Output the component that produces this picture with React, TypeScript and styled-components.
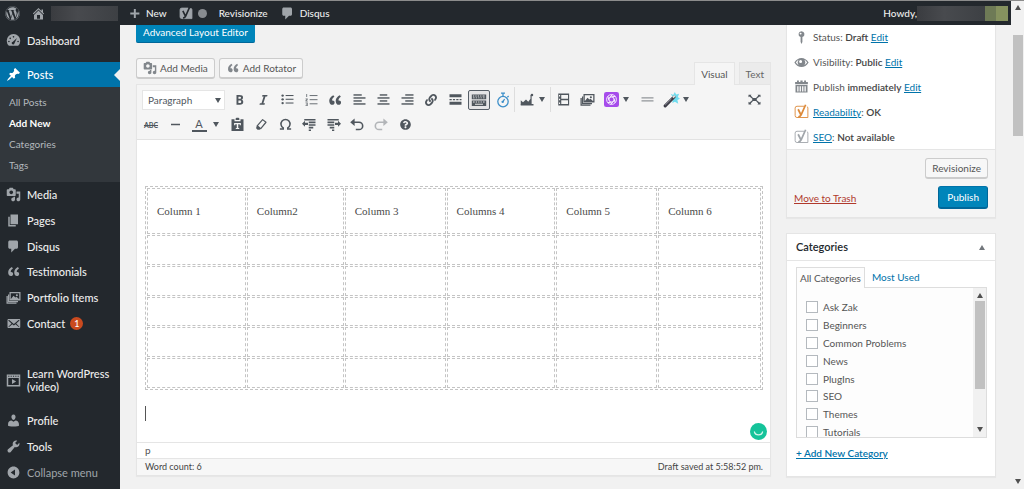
import React from "react";
import styled, { createGlobalStyle, css } from "styled-components";
import { FaWordpress, FaQuestionCircle, FaLink } from "react-icons/fa";

const sans = `Lato, "Open Sans", sans-serif`;
const blue = "#0085ba";
const line = "#e5e5e5";

const GlobalStyle = createGlobalStyle`
  * { box-sizing: border-box; }
  html { overflow: hidden; }
  body { margin: 0; background: #f1f1f1; color: #555; font: 10px/16px ${sans}; }
  button, input, select { font: inherit; color: inherit; margin: 0; }
  ul { list-style: none; margin: 0; padding: 0; }
  a { color: #0073aa; }
  svg { display: block; flex: none; }
`;

/* ---------- icons ---------- */

type GlyphProps = { size?: number; children: React.ReactNode };
const Glyph = ({ size = 15, children }: GlyphProps) => (
  <svg width={size} height={size} viewBox="0 0 20 20" fill="currentColor" aria-hidden="true">
    {children}
  </svg>
);

const paths = {
  home: "M16 8.5l1.53 1.53-1.06 1.06L10 4.6l-6.47 6.49-1.06-1.06L10 2.5l4 4v-2h2v4zm-6-2.46l6 5.99V18H4v-5.97zM12 17v-5H8v5h4z",
  pin: "M10.44 3.02l1.82-1.82 6.36 6.35-1.83 1.82c-1.05-.68-2.48-.57-3.41.36l-.75.75c-.92.93-1.04 2.35-.35 3.41l-1.83 1.82-2.41-2.41-2.8 2.79c-.42.42-3.38 2.71-3.8 2.29s1.86-3.39 2.28-3.81l2.79-2.79L4.1 9.36l1.83-1.82c1.05.69 2.48.57 3.4-.36l.75-.75c.93-.92 1.05-2.35.36-3.41z",
  media: "M13 11V4c0-.55-.45-1-1-1h-1.67L9 1H5L3.67 3H2c-.55 0-1 .45-1 1v7c0 .55.45 1 1 1h10c.55 0 1-.45 1-1zM7 4.5c1.38 0 2.5 1.12 2.5 2.5S8.38 9.5 7 9.5 4.5 8.38 4.5 7 5.62 4.5 7 4.5zM14 6h5v10.5c0 1.38-1.12 2.5-2.5 2.5S14 17.88 14 16.5s1.12-2.5 2.5-2.5c.17 0 .34.02.5.05V9h-3V6zm-4 8.05V13h2v3.5c0 1.38-1.12 2.5-2.5 2.5S7 17.88 7 16.5 8.12 14 9.5 14c.17 0 .34.02.5.05z",
  page: "M6 15V2h10v13H6zm-1 1h8v2H3V5h2v11z",
  comment: "M5 2h9c1.1 0 2 .9 2 2v7c0 1.1-.9 2-2 2h-2l-5 5v-5H5c-1.1 0-2-.9-2-2V4c0-1.1.9-2 2-2z",
  quote: "M9.49 13.22c0-.74-.2-1.38-.61-1.9-.62-.78-1.83-.88-2.53-.72-.29-1.65 1.11-3.75 2.92-4.65L7.88 4c-2.73 1.3-5.42 4.28-4.96 8.05C3.21 14.43 4.59 16 6.54 16c.85 0 1.56-.25 2.12-.75s.83-1.18.83-2.03zm8.05 0c0-.74-.2-1.38-.61-1.9-.63-.78-1.83-.88-2.53-.72-.29-1.65 1.11-3.75 2.92-4.65L15.93 4c-2.73 1.3-5.41 4.28-4.95 8.05.29 2.38 1.66 3.95 3.61 3.95.85 0 1.56-.25 2.12-.75s.83-1.18.83-2.03z",
  email: "M19 14.5v-9c0-.83-.67-1.5-1.5-1.5H3.49c-.83 0-1.5.67-1.5 1.5v9c0 .83.67 1.5 1.5 1.5H17.5c.83 0 1.5-.67 1.5-1.5zm-1.31-9.11c.33.33.15.67-.03.84L13.6 9.95l3.9 4.06c.12.14.2.36.06.51-.13.16-.43.15-.56.05l-4.37-3.73-2.14 1.95-2.13-1.95-4.37 3.73c-.13.1-.43.11-.56-.05-.14-.15-.06-.37.06-.51l3.9-4.06-4.06-3.72c-.18-.17-.36-.51-.03-.84s.67-.17.95.07l6.24 5.04 6.25-5.04c.28-.24.62-.4.95-.07z",
  user: "M10 9.25c-2.27 0-2.73-3.44-2.73-3.44C7 4.02 7.82 2 9.97 2c2.16 0 2.98 2.02 2.71 3.81 0 0-.41 3.44-2.68 3.44zm0 2.57L12.72 10c2.39 0 4.52 2.33 4.52 4.53v2.49s-3.65 1.13-7.24 1.13c-3.65 0-7.24-1.13-7.24-1.13v-2.49c0-2.25 1.94-4.48 4.47-4.48z",
  tools: "M16.68 9.77c-1.34 1.34-3.3 1.67-4.95.99l-5.41 6.52c-.99.99-2.59.99-3.58 0s-.99-2.59 0-3.57l6.52-5.42c-.68-1.65-.35-3.61.99-4.95 1.28-1.28 3.12-1.62 4.72-1.06l-2.89 2.89 2.82 2.82 2.86-2.87c.53 1.58.18 3.39-1.08 4.65z",
  collapse: "M10 2.16c4.33 0 7.84 3.51 7.84 7.84s-3.51 7.84-7.84 7.84S2.16 14.33 2.16 10 5.71 2.16 10 2.16zm2 11.72V6.12L6.18 9.97z",
  bold: "M6 4v13h4.54c1.37 0 2.46-.33 3.26-1 .8-.66 1.2-1.58 1.2-2.77 0-.84-.17-1.51-.51-2.01s-.9-.85-1.67-1.03v-.09c.57-.1 1.02-.4 1.36-.9s.51-1.13.51-1.91c0-1.14-.39-1.98-1.17-2.5C12.75 4.26 11.5 4 9.78 4H6zm2.57 5.15V6.26h1.36c.73 0 1.27.11 1.61.32.34.22.51.58.51 1.07 0 .54-.16.92-.47 1.15s-.82.35-1.51.35h-1.5zm0 2.19h1.6c1.44 0 2.16.53 2.16 1.61 0 .6-.17 1.05-.51 1.34s-.86.43-1.57.43H8.57v-3.38z",
  italic: "M14.78 6h-2.13l-2.8 9h2.12l-.62 2H4.6l.62-2h2.14l2.8-9H8.03l.62-2h6.75z",
  plus: "M9 3h3v5.500h5.500v3H12V17H9v-5.500H3.500v-3H9z",
  gauge: "M3.800 17A9 9 0 1 1 16.200 17zM10 4a1.100 1.100 0 1 0 0 2.200A1.100 1.100 0 0 0 10 4zM5.600 6a1.100 1.100 0 1 0 0 2.200A1.100 1.100 0 0 0 5.600 6zM14.600 6.500L9.200 11.500a1.900 1.900 0 1 0 2.100 2zM3.900 10.200a1.100 1.100 0 1 0 0 2.200 1.100 1.100 0 0 0 0-2.200zM16.100 10.200a1.100 1.100 0 1 0 0 2.200 1.100 1.100 0 0 0 0-2.200z",
  video: "M1 2h18v16H1zM3 6.500v9.500h14V6.500zM3 3.500v1.400h1.500V3.500zM6.200 3.500v1.400h1.500V3.500zM9.300 3.500v1.400h1.500V3.500zM12.400 3.500v1.400h1.500V3.500zM15.500 3.500v1.400H17V3.500zM8 8l5.500 3.300L8 14.600z",
  post: "M10 1.500a4 4 0 0 1 1.200 7.800V16L10 18.500 8.800 16V9.300A4 4 0 0 1 10 1.500zM8.800 3.500a1.300 1.300 0 1 0 0 2.600 1.300 1.300 0 0 0 0-2.600z",
  eye: "M.5 10C3 6 6.300 4 10 4s7 2 9.500 6c-2.500 4-5.800 6-9.500 6S3 14 .5 10zM2.500 10c1 1.600 2.300 2.900 3.900 3.600a5 5 0 0 1 0-7.200C4.800 7.100 3.500 8.400 2.500 10zM13.600 6.400a5 5 0 0 1 0 7.200c1.600-.7 2.900-2 3.900-3.600-1-1.600-2.300-2.900-3.900-3.600zM8.800 6.600a2 2 0 1 0 0 4 2 2 0 0 0 0-4z",
  calendar: "M1.500 4H4V2h2.500v2h2V2h3v2h2V2H16v2h2.500v3h-17zM2 8h16v10H2zM4.300 9.500v7h1.700v-7zM7.500 9.500v7h1.700v-7zM10.800 9.500v7h1.700v-7zM14 9.500v7h1.700v-7z",
};
type IconName = keyof typeof paths;
const Icon = ({ name, size }: { name: IconName; size?: number }) => (
  <Glyph size={size}>
    <path fillRule="evenodd" d={paths[name]} />
  </Glyph>
);

const Gallery = ({ size }: { size?: number }) => (
  <Glyph size={size}>
    <g fill="none" stroke="currentColor" strokeWidth="1.700">
      <path d="M5.500 3.500h13v9.500h-13z" />
      <path d="M3.500 6v9.500H16" />
      <path d="M1.500 8v9.500H14" />
    </g>
    <path d="M6 12.500l4-5 2.500 2.500L14 9l4 3.500z" />
    <circle cx="14.500" cy="7" r="1.400" />
  </Glyph>
);

const YoastLogo = ({ size = 14, solid }: { size?: number; solid?: boolean }) => (
  <svg width={size} height={size} viewBox="0 0 20 20" fill="none" aria-hidden="true">
    <path
      d="M13.500 3H4a2.500 2.500 0 0 0-2.500 2.500v10A2.500 2.500 0 0 0 4 18h14.500V5.500a2.500 2.500 0 0 0-1.300-2.200"
      fill={solid ? "currentColor" : "none"}
      stroke="currentColor"
      strokeWidth="1.200"
    />
    <path d="M5.500 7l3.500 7M15.500 1L9.500 14.500c-.8 1.900-1.600 2.600-3.800 2.700" stroke={solid ? "#23282d" : "currentColor"} strokeWidth="2.300" />
  </svg>
);

const Bars = ({ rows }: { rows: [number, number, number][] }) => (
  <Glyph>
    {rows.map(([x, y, w]) => (
      <rect key={y} x={x} y={y} width={w} height="1.900" />
    ))}
  </Glyph>
);

const BulletList = () => (
  <Glyph>
    {[4, 9, 14].map((y) => (
      <g key={y}>
        <circle cx="3.500" cy={y + 0.8} r="1.600" />
        <rect x="7.500" y={y} width="10.500" height="1.400" />
      </g>
    ))}
  </Glyph>
);
const NumberList = () => (
  <Glyph>
    <path d="M3 2.500h1.200v4H3zM2 8.500h3v1.500L3.500 11.500H5v1H2V11l1.500-1.500H2zM2 14h3v4.500H2v-1h1.800v-.8H2.500v-.9h1.300V15H2z" opacity=".8" />
    {[4, 9.500, 15].map((y) => (
      <rect key={y} x="7.500" y={y} width="10.500" height="1.400" opacity=".8" />
    ))}
  </Glyph>
);
const ReadMore = () => (
  <Glyph>
    <path d="M2 3h16v4H2zM2 13h16v4H2zM2 9.200h3v1.700H2zM6.500 9.200h3v1.700h-3zM11 9.200h3v1.700h-3zM15.500 9.200H18v1.700h-2.500z" />
  </Glyph>
);
const Keyboard = () => (
  <Glyph size={16}>
    <path fillRule="evenodd" d="M1 3h18v6H1zM2.500 4.500v1h1.500v-1zM5.500 4.500v1H7v-1zM8.500 4.500v1H10v-1zM11.500 4.500v1H13v-1zM14.500 4.500v1H17v-1zM2.500 6.800v1h2v-1zM6 6.800v1h1.500v-1zM9 6.800v1h1.500v-1zM12 6.800v1h1.500v-1zM15 6.800v1h2v-1zM1 10.500h18v7H1zM2.500 12v1.200h2V12zM6 12v1.200h1.500V12zM9 12v1.200h1.500V12zM12 12v1.200h1.500V12zM15 12v1.200h2V12zM5 14.800V16h10v-1.200z" />
  </Glyph>
);
const Stopwatch = () => (
  <Glyph size={16}>
    <g fill="none" stroke="#3d8fc9" strokeWidth="1.600">
      <circle cx="10" cy="12" r="6.500" />
      <path d="M10 5V2M7.500 1.500h5M15.500 6.500l1.500-1.500M9.500 12.500L12 9" />
    </g>
    <circle cx="9.600" cy="12.300" r="1.500" fill="#3d8fc9" />
  </Glyph>
);
const Chart = () => (
  <Glyph>
    <path d="M1 17v-6l3 2.500 4-3.500 3 3 3-4V4h1.500v13z" />
    <circle cx="16" cy="4" r="1.700" />
    <path d="M1 16h17v2H1z" />
  </Glyph>
);
const TableIcon = () => (
  <Glyph>
    <path fillRule="evenodd" d="M3 2h14.500v16H3zM4 4v2h1.500V4zM4 9v2h1.500V9zM4 14v2h1.500v-2zM7 4v5h9V4zM7 11v5h9v-5z" />
  </Glyph>
);
const Shutter = () => (
  <svg width="15" height="15" viewBox="0 0 20 20" aria-hidden="true">
    <rect width="20" height="20" rx="3" fill="#a64ceb" />
    <g fill="none" stroke="#fff" strokeWidth="1.200">
      <circle cx="10" cy="10" r="6.500" />
      <circle cx="10" cy="10" r="3.500" />
      <path d="M10 6.500l5-.8M13.300 9l1.500 5M12.500 12.500l-3.500 4M10 13.500l-5 .8M6.700 11L5.200 6M7.500 7.500l3.500-4" />
    </g>
  </svg>
);
const Wand = () => (
  <svg width="17" height="16" viewBox="0 0 20 19" aria-hidden="true">
    <path d="M9 2l3 1.500L14 0l1.500 3L19 2l-1.500 4L20 8l-3 1.500L18 14l-4-2.500L11 13l.5-4L9 7l2.500-1z" fill="#4fd6ec" opacity=".8" />
    <path d="M2.500 16.500L13 6" stroke="#3c3c46" strokeWidth="3.600" strokeLinecap="round" />
    <path d="M11.500 6.500L14 4.500" stroke="#ddd" strokeWidth="2.500" />
    <path d="M2.500 15.500L10 8" stroke="#a9a9b4" strokeWidth=".9" />
  </svg>
);
const Expand = () => (
  <Glyph>
    <path d="M2 3.500h4L5 4.700 8 8h4l3-3.300-1-1.200h4V7l-1.300-.9L13 9v2l3.700 2.900L18 13v3.500h-4l1-1.200L12 12H8l-3 3.300 1 1.200H2V13l1.300.9L7 11V9L3.300 6.100 2 7z" />
  </Glyph>
);
const Paste = () => (
  <Glyph>
    <path fillRule="evenodd" d="M7.500 4V2.500A1.500 1.500 0 0 1 9 1h2a1.500 1.500 0 0 1 1.500 1.500V4zM2 3h4v2.500h8V3h4v15.500H2zM5.500 8v3h1.500V9.800h2v5H7.700V16h4.600v-1.200H11v-5h2V11h1.500V8z" />
  </Glyph>
);
const Eraser = () => (
  <Glyph>
    <path d="M11.500 3.500l4.500 3.500-7 8.500-4.800-3.700z" fill="none" stroke="currentColor" strokeWidth="1.600" strokeLinejoin="round" />
    <path d="M4.200 11.800L9 15.500 7.500 17H4.800L3 15.300v-2z" />
  </Glyph>
);
const Omega = () => (
  <Glyph>
    <path d="M2.500 16h4.500v-1.500A6 6 0 1 1 13 14.500V16h4.500" fill="none" stroke="currentColor" strokeWidth="2" />
  </Glyph>
);
const Shift = ({ inward }: { inward?: boolean }) => (
  <Glyph>
    <g transform={inward ? "matrix(-1 0 0 1 20 0)" : undefined}>
      <path d="M3 2.500h15v2.200H3zM9 6h9v2.200H9zM9 9.500h9v2.200H9zM9 13h6v2.200H9zM9 16.500h3v2H9zM0 9l4-4v2.500h4v3H4V13z" />
    </g>
  </Glyph>
);
const Turn = ({ redo }: { redo?: boolean }) => (
  <Glyph size={16}>
    <g transform={redo ? "matrix(-1 0 0 1 20 0)" : undefined} opacity={redo ? 0.4 : 1}>
      <path d="M5 6.500h7.500a4.600 4.600 0 0 1 0 9.200H8.500" fill="none" stroke="currentColor" strokeWidth="2" />
      <path d="M7 1.800v9.400L1.500 6.500z" />
    </g>
  </Glyph>
);
const Caret = ({ up }: { up?: boolean }) => (
  <svg width="6" height="5" viewBox="0 0 6 5" fill="currentColor" aria-hidden="true">
    <path d={up ? "M0 5h6L3 0z" : "M0 0h6L3 5z"} />
  </svg>
);

/* ---------- page frame ---------- */

const Page = styled.div`
  display: grid;
  grid-template-columns: minmax(0, 1fr) 13px;
  min-height: 100vh;
  border-top: 1px solid #8c8c8c;
`;
const Admin = styled.div`
  display: grid;
  grid-template-columns: 120px minmax(0, 1fr);
  grid-template-rows: 24px minmax(0, 1fr);
`;
const AdminBar = styled.header`
  grid-column: 1 / -1;
  display: flex;
  align-items: center;
  padding: 0 3px 0 5px;
  background: #23282d;
  color: #eee;
`;
const BarLink = styled.a<{ $gap?: number }>`
  display: flex;
  align-items: center;
  gap: 5px;
  margin-right: ${(p) => p.$gap ?? 12}px;
  color: #eee;
  text-decoration: none;
  font-weight: 500;
  svg { color: #a0a5aa; }
`;
const Redacted = styled.span<{ $width: number }>`
  width: ${(p) => p.$width}px;
  height: 15px;
  background: linear-gradient(90deg, #3a3c40, #484a4e 40%, #3d4044);
`;
const Avatar = styled.span`
  width: 23px;
  height: 15px;
  background: linear-gradient(90deg, #6e7a56 50%, #86925f 50%);
`;
const StatusDot = styled.span`
  width: 9px;
  height: 9px;
  border-radius: 50%;
  background: #888c90;
`;
const Howdy = styled.div`
  display: flex;
  align-items: center;
  margin-left: auto;
  font-weight: 500;
`;

/* ---------- side menu ---------- */

const SideMenu = styled.nav`
  background: #23282d;
  padding-top: 3px;
  font-size: 11px;
`;
const MenuGroup = styled.ul<{ $height: number; $gap?: number; $rowGap?: number }>`
  display: grid;
  grid-auto-rows: 1fr;
  row-gap: ${(p) => p.$rowGap ?? 0}px;
  height: ${(p) => p.$height}px;
  margin-top: ${(p) => p.$gap ?? 0}px;
`;
const MenuLink = styled.a<{ $active?: boolean; $muted?: boolean }>`
  position: relative;
  display: flex;
  align-items: center;
  gap: 6px;
  height: 100%;
  padding-left: 6px;
  color: ${(p) => (p.$muted ? "#a0a5aa" : "#eee")};
  line-height: 13px;
  font-weight: ${(p) => (p.$muted ? 400 : 500)};
  text-decoration: none;
  svg { color: #a0a5aa; }
  ${(p) =>
    p.$active &&
    css`
      background: #0073aa;
      color: #fff;
      svg { color: #fff; }
      &::after {
        content: "";
        position: absolute;
        right: 0;
        top: 7px;
        border: 6px solid transparent;
        border-left: 0;
        border-right-color: #f1f1f1;
      }
    `}
`;
const SubMenu = styled.ul`
  padding: 5px 0 6px 9px;
  background: #32373c;
  font-size: 10px;
`;
const SubLink = styled.a<{ $current?: boolean }>`
  display: block;
  line-height: 21px;
  color: ${(p) => (p.$current ? "#fff" : "#b4b9be")};
  font-weight: ${(p) => (p.$current ? 700 : 400)};
  text-decoration: none;
`;
const CountBadge = styled.span`
  width: 13px;
  height: 13px;
  margin-left: -1px;
  border-radius: 50%;
  background: #ca4a1f;
  color: #fff;
  font-size: 9px;
  text-align: center;
`;

/* ---------- editor ---------- */

const Content = styled.div`
  display: grid;
  grid-template-columns: minmax(0, 1fr) 210px;
  gap: 15px;
  align-items: start;
  padding: 0 15px 0 16px;
`;
const EditorColumn = styled.main`
  display: flex;
  flex-direction: column;
  align-items: stretch;
`;
const LayoutButton = styled.button`
  align-self: flex-start;
  height: 18px;
  padding: 0 7px 2px;
  border: 0;
  border-bottom: 1px solid #006799;
  border-radius: 0 0 2px 2px;
  background: ${blue};
  color: #fff;
  line-height: 15px;
`;
const MediaRow = styled.div`
  display: flex;
  align-items: flex-start;
  gap: 4px;
  margin-top: 15px;
`;
const Button = styled.button`
  display: flex;
  align-items: center;
  gap: 3px;
  height: 21px;
  padding: 0 6px;
  border: 1px solid #ccc;
  border-bottom-width: 2px;
  border-radius: 3px;
  background: #f7f7f7;
  svg { color: #82878c; }
`;
const Tabs = styled.div`
  display: flex;
  gap: 4px;
  margin: 4px 0 0 auto;
`;
const Tab = styled.button<{ $current?: boolean }>`
  height: ${(p) => (p.$current ? 23 : 22)}px;
  margin-bottom: ${(p) => (p.$current ? -1 : 0)}px;
  padding: 0 6px;
  border: 1px solid ${line};
  border-bottom: 0;
  background: ${(p) => (p.$current ? "#f5f5f5" : "#ebebeb")};
  color: ${(p) => (p.$current ? "#555" : "#666")};
  z-index: 1;
`;
const Editor = styled.section`
  border: 1px solid ${line};
  box-shadow: 0 1px 1px rgba(0, 0, 0, 0.04);
  background: #fff;
`;
const Toolbar = styled.div`
  padding: 2px 4px 2px 2px;
  border-bottom: 1px solid #e2e2e2;
  background: #f5f5f5;
  color: #50575e;
`;
const ToolRow = styled.div`
  display: flex;
  align-items: center;
  height: 25px;
`;
const FormatSelect = styled.div`
  position: relative;
  flex: none;
  margin: 0 2px 0 3px;
  select {
    display: block;
    width: 83px;
    height: 20px;
    padding: 0 5px;
    border: 1px solid ${line};
    border-radius: 0;
    background: #fff;
    appearance: none;
  }
  svg {
    position: absolute;
    right: 4px;
    top: 8px;
    pointer-events: none;
  }
`;
const Tool = styled.button<{ $on?: boolean; $end?: boolean }>`
  display: grid;
  place-items: center;
  flex: none;
  width: ${(p) => (p.$on ? 22 : 24)}px;
  height: 20px;
  margin: 0 ${(p) => (p.$on ? 1 : 0)}px;
  ${(p) => p.$end && "margin-left: auto;"}
  padding: 0;
  border: ${(p) => (p.$on ? "1px solid #555d66" : "0")};
  border-radius: 2px;
  background: ${(p) => (p.$on ? "#e4e4e6" : "none")};
`;
const Drop = styled.button<{ $width?: number }>`
  display: flex;
  align-items: center;
  width: ${(p) => p.$width ?? 12}px;
  height: 20px;
  padding: 0 0 0 ${(p) => (p.$width ? 2 : 0)}px;
  border: 0;
  background: none;
`;
const ToolGroup = styled.div`
  display: flex;
  align-items: center;
  height: 25px;
  box-shadow: -1px 0 0 #ddd;
`;
const Strike = styled.span`
  font-size: 7px;
  line-height: 10px;
  font-weight: 700;
  text-decoration: line-through;
`;
const ColorLetter = styled.span`
  width: 15px;
  border-bottom: 2px solid currentColor;
  font-size: 11px;
  line-height: 12px;
`;
const Canvas = styled.div`
  position: relative;
  padding: 46px 7px 21px 8px;
`;
const DataTable = styled.table`
  width: 100%;
  height: 204px;
  table-layout: fixed;
  border: 1px dashed #c4c4c4;
  border-collapse: separate;
  border-spacing: 1px;
  color: #4a4a4a;
  font-family: "Liberation Serif", serif;
  font-size: 11px;
  th, td {
    padding: 0 9px;
    border: 1px dashed #c4c4c4;
    text-align: left;
    font-weight: 400;
  }
  thead tr { height: 46px; }
`;
const TextCaret = styled.div`
  width: 1px;
  height: 15px;
  margin-top: 16px;
  background: #555;
`;
const Checker = styled.div`
  position: absolute;
  right: 3px;
  bottom: 2px;
`;
const PathBar = styled.div`
  height: 16px;
  padding-left: 8px;
  border-top: 1px solid ${line};
  line-height: 15px;
`;
const StatusBar = styled.div`
  display: flex;
  justify-content: space-between;
  padding: 0 7px 0 8px;
  border-top: 1px solid ${line};
  background: #f7f7f7;
  color: #444;
  font-size: 9px;
`;

/* ---------- right column ---------- */

const Aside = styled.aside`
  display: flex;
  flex-direction: column;
  gap: 15px;
`;
const Box = styled.section`
  border: 1px solid ${line};
  box-shadow: 0 1px 1px rgba(0, 0, 0, 0.04);
  background: #fff;
`;
const PublishBox = styled(Box)`
  border-top: 0;
`;
const PublishRow = styled.p`
  display: flex;
  align-items: center;
  gap: 4px;
  margin: 0;
  padding-left: 7px;
  svg { color: #82878c; }
  b { font-weight: 600; color: #444; }
`;
const PublishRows = styled.div`
  display: grid;
  grid-auto-rows: 1fr;
  height: 125px;
  border-bottom: 1px solid ${line};
`;
const YoastMark = styled.span<{ $color: string }>`
  svg { color: ${(p) => p.$color}; }
`;
const PublishFooter = styled.div`
  display: flex;
  flex-direction: column;
  gap: 7px;
  padding: 8px 7px;
  background: #f5f5f5;
  button { margin-left: auto; }
`;
const FooterRow = styled.div`
  display: flex;
  align-items: center;
`;
const TrashLink = styled.a`
  color: #b0392c;
`;
const PlainButton = styled(Button)`
  padding: 0 6px;
`;
const PrimaryButton = styled(Button)`
  height: 23px;
  padding: 0 8px;
  border-color: #0073aa #006799 #006799;
  background: ${blue};
  color: #fff;
`;
const BoxHeader = styled.h2`
  display: flex;
  align-items: center;
  justify-content: space-between;
  height: 27px;
  margin: 0;
  padding: 0 10px 0 9px;
  border-bottom: 1px solid ${line};
  color: #23282d;
  font-size: 11px;
  font-weight: 600;
  svg { color: #72777c; }
`;
const BoxBody = styled.div`
  padding: 6px 8px 15px 9px;
`;
const CategoryTabs = styled.div`
  display: flex;
  a {
    padding: 2px 7px;
    text-decoration: none;
  }
`;
const CategoryTab = styled.button`
  height: 21px;
  margin-bottom: -1px;
  padding: 0 3px;
  border: 1px solid #ddd;
  border-bottom: 0;
  background: #fdfdfd;
  z-index: 1;
`;
const CategoryPanel = styled.div`
  display: flex;
  height: 151px;
  overflow: hidden;
  border: 1px solid #ddd;
  background: #fdfdfd;
`;
const CategoryList = styled.ul`
  display: grid;
  grid-auto-rows: 1fr;
  flex: 1;
  height: 143px;
  margin: 11px 0 0 9px;
`;
const CategoryLabel = styled.label`
  display: flex;
  align-items: center;
  gap: 5px;
  input {
    appearance: none;
    width: 12px;
    height: 12px;
    border: 1px solid #b4b9be;
    background: #fff;
  }
`;
const ScrollTrack = styled.div<{ $pad?: number }>`
  display: flex;
  flex-direction: column;
  align-items: center;
  width: 13px;
  padding: ${(p) => p.$pad ?? 5}px 0 5px;
  background: #f1f1f1;
  color: #505050;
`;
const ScrollThumb = styled.div<{ $length: number; $gap: number }>`
  width: 10px;
  height: ${(p) => p.$length}px;
  margin: ${(p) => p.$gap}px 0 auto;
  background: #c1c1c1;
`;
const AddCategory = styled.a`
  display: inline-block;
  margin-top: 7px;
  font-weight: 600;
`;

const mainItems: { label: string; icon: React.ReactNode; count?: number }[] = [
  { label: "Media", icon: <Icon name="media" /> },
  { label: "Pages", icon: <Icon name="page" /> },
  { label: "Disqus", icon: <Icon name="comment" /> },
  { label: "Testimonials", icon: <Icon name="quote" /> },
  { label: "Portfolio Items", icon: <Gallery /> },
  { label: "Contact", icon: <Icon name="email" />, count: 1 },
];
const subItems = ["All Posts", "Add New", "Categories", "Tags"];
const columns: [string, number][] = [
  ["Column 1", 100],
  ["Column2", 98],
  ["Column 3", 102],
  ["Columns 4", 110],
  ["Column 5", 102],
  ["Column 6", 104],
];
const categories = ["Ask Zak", "Beginners", "Common Problems", "News", "PlugIns", "SEO", "Themes", "Tutorials"];

const tool = (label: string, icon: React.ReactNode) => (
  <Tool key={label} aria-label={label}>
    {icon}
  </Tool>
);

export default function App() {
  return (
    <>
      <GlobalStyle />
      <Page>
        <Admin>
          <AdminBar>
            <BarLink href="#" $gap={11} aria-label="WordPress"><FaWordpress size={15} /></BarLink>
            <BarLink href="#" $gap={10} aria-label="Site">
              <Icon name="home" />
              <Redacted $width={67} />
            </BarLink>
            <BarLink href="#"><Icon name="plus" size={13} />New</BarLink>
            <BarLink href="#" aria-label="SEO">
              <YoastLogo solid />
              <StatusDot />
            </BarLink>
            <BarLink href="#">Revisionize</BarLink>
            <BarLink href="#"><Icon name="comment" />Disqus</BarLink>
            <Howdy>Howdy,<Redacted $width={68} /><Avatar /></Howdy>
          </AdminBar>

          <SideMenu aria-label="Main menu">
            <MenuGroup $height={59} $rowGap={8}>
              <li><MenuLink href="#"><Icon name="gauge" />Dashboard</MenuLink></li>
              <li><MenuLink href="#" $active><Icon name="pin" />Posts</MenuLink></li>
            </MenuGroup>
            <SubMenu>
              {subItems.map((s) => (
                <li key={s}><SubLink href="#" $current={s === "Add New"}>{s}</SubLink></li>
              ))}
            </SubMenu>
            <MenuGroup $height={154}>
              {mainItems.map((m) => (
                <li key={m.label}>
                  <MenuLink href="#">
                    {m.icon}
                    {m.label}
                    {m.count && <CountBadge>{m.count}</CountBadge>}
                  </MenuLink>
                </li>
              ))}
            </MenuGroup>
            <MenuGroup $height={38} $gap={25}>
              <li><MenuLink href="#"><Icon name="video" />Learn WordPress<br />(video)</MenuLink></li>
            </MenuGroup>
            <MenuGroup $height={77} $gap={9}>
              <li><MenuLink href="#"><Icon name="user" />Profile</MenuLink></li>
              <li><MenuLink href="#"><Icon name="tools" />Tools</MenuLink></li>
              <li><MenuLink href="#" $muted><Icon name="collapse" />Collapse menu</MenuLink></li>
            </MenuGroup>
          </SideMenu>

          <Content>
            <EditorColumn>
              <LayoutButton>Advanced Layout Editor</LayoutButton>
              <MediaRow>
                <Button><Icon name="media" size={14} />Add Media</Button>
                <Button><Icon name="quote" size={14} />Add Rotator</Button>
                <Tabs>
                  <Tab $current>Visual</Tab>
                  <Tab>Text</Tab>
                </Tabs>
              </MediaRow>
              <Editor>
                <Toolbar>
                  <ToolRow>
                    <FormatSelect>
                      <select aria-label="Format" defaultValue="Paragraph"><option>Paragraph</option></select>
                      <Caret />
                    </FormatSelect>
                    {tool("Bold", <Icon name="bold" />)}
                    {tool("Italic", <Icon name="italic" />)}
                    {tool("Bulleted list", <BulletList />)}
                    {tool("Numbered list", <NumberList />)}
                    {tool("Blockquote", <Icon name="quote" size={16} />)}
                    {tool("Align left", <Bars rows={[[2, 3, 11], [2, 7, 16], [2, 11, 11], [2, 15, 16]]} />)}
                    {tool("Align center", <Bars rows={[[5, 3, 10], [2, 7, 16], [5, 11, 10], [2, 15, 16]]} />)}
                    {tool("Align right", <Bars rows={[[7, 3, 11], [2, 7, 16], [7, 11, 11], [2, 15, 16]]} />)}
                    {tool("Link", <FaLink size={12} />)}
                    {tool("Read more", <ReadMore />)}
                    <Tool $on aria-label="Toolbar toggle"><Keyboard /></Tool>
                    {tool("Timer", <Stopwatch />)}
                    <ToolGroup>
                      {tool("Chart", <Chart />)}
                      <Drop aria-label="Chart options"><Caret /></Drop>
                    </ToolGroup>
                    <ToolGroup>
                      {tool("Table", <TableIcon />)}
                      {tool("Gallery", <Gallery />)}
                      {tool("Shutter", <Shutter />)}
                      <Drop aria-label="Shutter options"><Caret /></Drop>
                      {tool("Divider", <Glyph><path d="M2 7h16v1.800H2zM2 11h16v1.800H2z" opacity=".6" /></Glyph>)}
                      {tool("Magic", <Wand />)}
                      <Drop aria-label="Magic options"><Caret /></Drop>
                    </ToolGroup>
                    <Tool $end aria-label="Fullscreen"><Expand /></Tool>
                  </ToolRow>
                  <ToolRow>
                    {tool("Strikethrough", <Strike>ABC</Strike>)}
                    {tool("Horizontal line", <Glyph><path d="M4 9h12v2H4z" /></Glyph>)}
                    {tool("Text color", <ColorLetter>A</ColorLetter>)}
                    <Drop $width={14} aria-label="Text color options"><Caret /></Drop>
                    {tool("Paste as text", <Paste />)}
                    {tool("Clear formatting", <Eraser />)}
                    {tool("Special character", <Omega />)}
                    {tool("Decrease indent", <Shift />)}
                    {tool("Increase indent", <Shift inward />)}
                    {tool("Undo", <Turn />)}
                    {tool("Redo", <Turn redo />)}
                    {tool("Help", <FaQuestionCircle size={11} />)}
                  </ToolRow>
                </Toolbar>
                <Canvas>
                  <DataTable>
                    <colgroup>
                      {columns.map(([c, w]) => <col key={c} width={`${(w / 616) * 100}%`} />)}
                    </colgroup>
                    <thead>
                      <tr>{columns.map(([c]) => <th key={c} scope="col">{c}</th>)}</tr>
                    </thead>
                    <tbody>
                      {[1, 2, 3, 4, 5].map((r) => (
                        <tr key={r}>{columns.map(([c]) => <td key={c} />)}</tr>
                      ))}
                    </tbody>
                  </DataTable>
                  <TextCaret />
                  <Checker>
                    <svg width="17" height="17" viewBox="0 0 17 17" aria-hidden="true">
                      <circle cx="8.500" cy="8.500" r="8.500" fill="#15c39a" />
                      <path d="M4.300 8.500a4.300 4.300 0 0 0 8.400 0" fill="none" stroke="#d5f5ec" strokeWidth="1.200" />
                    </svg>
                  </Checker>
                </Canvas>
                <PathBar>p</PathBar>
                <StatusBar>
                  <span>Word count: 6</span>
                  <span>Draft saved at 5:58:52 pm.</span>
                </StatusBar>
              </Editor>
            </EditorColumn>

            <Aside>
              <PublishBox>
                <PublishRows>
                  <PublishRow><Icon name="post" /><span>Status: <b>Draft</b> <a href="#">Edit</a></span></PublishRow>
                  <PublishRow><Icon name="eye" /><span>Visibility: <b>Public</b> <a href="#">Edit</a></span></PublishRow>
                  <PublishRow><Icon name="calendar" /><span>Publish <b>immediately</b> <a href="#">Edit</a></span></PublishRow>
                  <PublishRow><YoastMark $color="#dd8a3a"><YoastLogo size={15} /></YoastMark><span><a href="#">Readability</a>: <b>OK</b></span></PublishRow>
                  <PublishRow><YoastMark $color="#a0a5aa"><YoastLogo size={15} /></YoastMark><span><a href="#">SEO</a>: <b>Not available</b></span></PublishRow>
                </PublishRows>
                <PublishFooter>
                  <FooterRow><PlainButton>Revisionize</PlainButton></FooterRow>
                  <FooterRow>
                    <TrashLink href="#">Move to Trash</TrashLink>
                    <PrimaryButton>Publish</PrimaryButton>
                  </FooterRow>
                </PublishFooter>
              </PublishBox>

              <Box>
                <BoxHeader>Categories<Caret up /></BoxHeader>
                <BoxBody>
                  <CategoryTabs>
                    <CategoryTab>All Categories</CategoryTab>
                    <a href="#">Most Used</a>
                  </CategoryTabs>
                  <CategoryPanel>
                    <CategoryList>
                      {categories.map((c) => (
                        <li key={c}><CategoryLabel><input type="checkbox" />{c}</CategoryLabel></li>
                      ))}
                    </CategoryList>
                    <ScrollTrack aria-hidden="true">
                      <Caret up />
                      <ScrollThumb $length={88} $gap={3} />
                      <Caret />
                    </ScrollTrack>
                  </CategoryPanel>
                  <AddCategory href="#">+ Add New Category</AddCategory>
                </BoxBody>
              </Box>
            </Aside>
          </Content>
        </Admin>
        <ScrollTrack $pad={4} aria-hidden="true">
          <Caret up />
          <ScrollThumb $length={101} $gap={25} />
          <Caret />
        </ScrollTrack>
      </Page>
    </>
  );
}
